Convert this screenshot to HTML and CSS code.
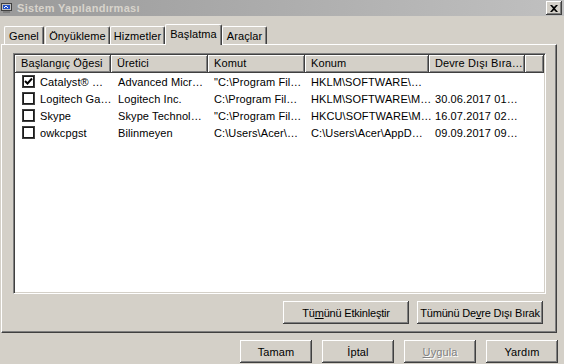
FILE: index.html
```html
<!DOCTYPE html>
<html lang="tr">
<head>
  <meta charset="UTF-8">
  <title>Sistem Yapılandırması</title>
  <link rel="stylesheet" href="styles.css">
</head>
<body>
<div class="window">
  <div class="titlebar">
    <svg class="app-icon" width="12" height="12" viewBox="0 0 12 12">
      <rect x="0.5" y="1.5" width="10" height="7" fill="#c0c0c0" stroke="#404040"/>
      <rect x="2" y="3" width="7" height="4" fill="#2050c8"/>
      <path d="M3 6 L5 4 L7 6" stroke="#fff" fill="none"/>
      <rect x="2" y="9" width="7" height="2" fill="#808080"/>
    </svg>
    <span class="title">Sistem Yapılandırması</span>
    <div class="close">
      <svg width="8" height="7" viewBox="0 0 8 7">
        <path d="M0 0 L2 0 L4 2 L6 0 L8 0 L5 3.5 L8 7 L6 7 L4 5 L2 7 L0 7 L3 3.5 Z" fill="#000"/>
      </svg>
    </div>
  </div>

  <div class="tabs">
    <div class="tab tab-genel">Genel</div>
    <div class="tab tab-onyukleme">Önyükleme</div>
    <div class="tab tab-hizmetler">Hizmetler</div>
    <div class="tab tab-active">Başlatma</div>
    <div class="tab tab-araclar">Araçlar</div>
  </div>

  <div class="panel">
    <div class="listview">
      <div class="lv-head">
        <div class="hcell c1">Başlangıç Öğesi</div>
        <div class="hcell c2">Üretici</div>
        <div class="hcell c3">Komut</div>
        <div class="hcell c4">Konum</div>
        <div class="hcell c5">Devre Dışı Bıra…</div>
        <div class="hcell c6"></div>
      </div>
      <div class="lv-row">
        <div class="cell c1"><span class="check checked"><svg width="9" height="9" viewBox="0 0 9 9"><path d="M1 4 L3.5 6.5 L8 1.5" stroke="#000" stroke-width="2" fill="none"/></svg></span>Catalyst® …</div>
        <div class="cell c2">Advanced Micr…</div>
        <div class="cell c3">"C:\Program Fil…</div>
        <div class="cell c4">HKLM\SOFTWARE\…</div>
        <div class="cell c5"></div>
      </div>
      <div class="lv-row">
        <div class="cell c1"><span class="check"></span>Logitech Ga…</div>
        <div class="cell c2">Logitech Inc.</div>
        <div class="cell c3">C:\Program Fil…</div>
        <div class="cell c4">HKLM\SOFTWARE\M…</div>
        <div class="cell c5">30.06.2017 01…</div>
      </div>
      <div class="lv-row">
        <div class="cell c1"><span class="check"></span>Skype</div>
        <div class="cell c2">Skype Technol…</div>
        <div class="cell c3">"C:\Program Fil…</div>
        <div class="cell c4">HKCU\SOFTWARE\M…</div>
        <div class="cell c5">16.07.2017 02…</div>
      </div>
      <div class="lv-row">
        <div class="cell c1"><span class="check"></span>owkcpgst</div>
        <div class="cell c2">Bilinmeyen</div>
        <div class="cell c3">C:\Users\Acer\…</div>
        <div class="cell c4">C:\Users\Acer\AppD…</div>
        <div class="cell c5">09.09.2017 09…</div>
      </div>
    </div>

    <div class="panel-buttons">
      <div class="btn btn-wide">Tü<u>m</u>ünü Etkinleştir</div>
      <div class="btn btn-wide">Tümünü De<u>v</u>re Dışı Bırak</div>
    </div>
  </div>

  <div class="dialog-buttons">
    <div class="btn">Tamam</div>
    <div class="btn">İptal</div>
    <div class="btn disabled"><u>U</u>ygula</div>
    <div class="btn">Yardım</div>
  </div>
</div>
</body>
</html>
```

FILE: styles.css
```css
body { margin: 0; font-family: "Liberation Sans", Arial, sans-serif; font-size: 11px; letter-spacing: 0.1px; color: #000; background: #d4d0c8; }
.window { width: 564px; height: 364px; overflow: hidden; background: #d4d0c8; }

/* barra de titulo */
.titlebar { height: 16px; display: flex; align-items: center; background: linear-gradient(to right, #9a9a9a, #c0c0c0); }
.app-icon { margin: 0 4px 0 1px; }
.title { color: #d8d4cc; font-weight: bold; font-size: 11px; letter-spacing: 0.3px; }
.close { margin-left: auto; margin-right: 2px; width: 16px; height: 14px; display: flex; align-items: center; justify-content: center; background: #d4d0c8; box-sizing: border-box;
  box-shadow: inset -1px -1px #404040, inset 1px 1px #fff, inset -2px -2px #808080; }

/* abas */
.tabs { height: 28px; display: flex; align-items: flex-end; padding-left: 4px; box-sizing: border-box; position: relative; z-index: 1; }
.tab { height: 18px; display: flex; align-items: center; justify-content: center; box-sizing: border-box; border-left: 1px solid #fff; border-top: 1px solid #fff; border-right: 1px solid #404040; border-radius: 2px 2px 0 0; box-shadow: inset -1px 0 #808080; }
.tab-genel { width: 40px; margin-right: 1px; }
.tab-onyukleme { width: 65px; }
.tab-hizmetler { width: 55px; }
.tab-active { width: 57px; height: 21px; margin-bottom: -1px; padding-bottom: 3px; background: #d4d0c8; }
.tab-araclar { width: 45px; }

/* painel */
.panel { margin-left: 1px; width: 556px; height: 289px; box-sizing: border-box; border-top: 1px solid #fff; border-left: 1px solid #fff; border-right: 1px solid #404040; border-bottom: 1px solid #404040; box-shadow: inset -1px -1px #808080; padding: 8px 0 0 11px; }

.listview { width: 533px; height: 241px; box-sizing: border-box; background: #fff; border-top: 1px solid #808080; border-left: 1px solid #808080; border-right: 1px solid #fff; border-bottom: 1px solid #fff; box-shadow: inset 1px 1px #404040, inset -1px -1px #d4d0c8; padding: 1px; }
.lv-head { display: flex; height: 18px; }
.hcell { height: 18px; box-sizing: border-box; padding-left: 6px; line-height: 17px; background: #d4d0c8; white-space: nowrap; overflow: hidden;
  box-shadow: inset -1px -1px #404040, inset 1px 1px #fff, inset -2px -2px #808080; }
.c1 { width: 96px; }
.c2 { width: 97px; }
.c3 { width: 97px; }
.c4 { width: 124px; }
.c5 { width: 96px; }
.c6 { flex: 1; }
.lv-row { display: flex; height: 17px; align-items: center; }
.lv-row:first-of-type { margin-top: 1px; }
.cell { flex-shrink: 0; padding-left: 6px; box-sizing: border-box; white-space: nowrap; display: flex; align-items: center; }
.cell.c2 { padding-left: 7px; }
.cell.c1 { padding-left: 7px; }
.check { flex-shrink: 0; width: 13px; height: 13px; box-sizing: border-box; border: 1px solid #404040; box-shadow: inset 0 0 0 1px #1a1a1a; margin-right: 5px; display: flex; align-items: center; justify-content: center; background: #fff; }

.panel-buttons { display: flex; justify-content: flex-end; gap: 8px; margin-top: 7px; width: 530px; }

/* botoes */
.btn { width: 72px; height: 23px; box-sizing: border-box; display: flex; align-items: center; justify-content: center; background: #d4d0c8;
  box-shadow: inset -1px -1px #404040, inset 1px 1px #fff, inset -2px -2px #808080; }
.btn-wide { width: 126px; letter-spacing: -0.2px; }
.btn.disabled { color: #808080; text-shadow: 1px 1px #fff; }

.dialog-buttons { display: flex; gap: 10px; padding-left: 240px; margin-top: 7px; }
```
